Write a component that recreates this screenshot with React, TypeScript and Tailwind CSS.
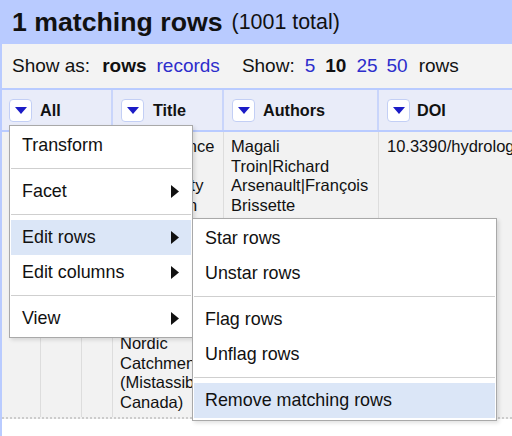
import React from 'react';

const titleLines = [
  'Performance',
  'and',
  'Uncertainty',
  'Evaluation',
  'of Snow',
  'Models on',
  'Snowmelt',
  'Flow',
  'Simulations',
  'over a',
  'Nordic',
  'Catchment',
  '(Mistassibi,',
  'Canada)',
];

const authorLines = ['Magali', 'Troin|Richard', 'Arsenault|François', 'Brissette'];

function DropButton() {
  return (
    <span className="flex h-[23px] w-[23px] shrink-0 items-center justify-center rounded-[4px] border border-[#c3cff5] bg-white">
      <svg width="12" height="7" viewBox="0 0 12 7">
        <polygon points="0,0 12,0 6,7" fill="#1c1cc6" />
      </svg>
    </span>
  );
}

function Arrow() {
  return (
    <svg width="8" height="13" viewBox="0 0 8 13">
      <polygon points="0,0 8,6.5 0,13" fill="#111" />
    </svg>
  );
}

function MenuItem({ label, arrow, active }: { label: string; arrow?: boolean; active?: boolean }) {
  return (
    <div
      className={`flex h-[35px] items-center justify-between pl-[11px] pr-[12px] text-[17.9px] text-[#111] ${
        active ? 'bg-[#dbe6f7]' : ''
      }`}
    >
      <span>{label}</span>
      {arrow && <Arrow />}
    </div>
  );
}

function Sep() {
  return <div className="my-[5px] h-px bg-[#cfcfcf]" />;
}

export default function App() {
  return (
    <div className="relative h-[436px] w-[512px] overflow-hidden border-l-2 border-[#b9cbff] bg-white font-['Liberation_Sans',Arial,sans-serif] text-[#111]">
      {/* summary bar */}
      <div className="flex h-[44px] items-center gap-[9px] bg-[#b9cbff] pl-[10px]">
        <span className="text-[26.7px] font-bold">1 matching rows</span>
        <span className="text-[21.4px]">(1001 total)</span>
      </div>

      {/* view controls */}
      <div className="flex h-[46px] items-center border-b-2 border-[#b9cbff] bg-[#f3f3f3] pl-[10px] text-[19px]">
        <span>Show as:</span>
        <span className="ml-[12px] font-bold">rows</span>
        <span className="ml-[10px] text-[#2d2dcc]">records</span>
        <span className="ml-[22px]">Show:</span>
        <span className="ml-[10px] text-[#2d2dcc]">5</span>
        <span className="ml-[10px] font-bold">10</span>
        <span className="ml-[10px] text-[#2d2dcc]">25</span>
        <span className="ml-[9px] text-[#2d2dcc]">50</span>
        <span className="ml-[11px]">rows</span>
      </div>

      {/* column headers */}
      <div className="flex h-[42px] border-b-2 border-[#b9cbff] bg-[#e9ecf9] text-[16.2px] font-bold">
        <div className="flex w-[111px] shrink-0 items-center gap-[8px] border-r-2 border-[#c9d5fb] pl-[7px]">
          <DropButton />
          <span>All</span>
        </div>
        <div className="flex w-[111px] shrink-0 items-center gap-[9px] border-r-2 border-[#c9d5fb] pl-[8px]">
          <DropButton />
          <span>Title</span>
        </div>
        <div className="flex w-[155px] shrink-0 items-center gap-[8px] border-r-2 border-[#c9d5fb] pl-[8px]">
          <DropButton />
          <span>Authors</span>
        </div>
        <div className="flex min-w-0 flex-1 items-center gap-[7px] pl-[8px]">
          <DropButton />
          <span>DOI</span>
        </div>
      </div>

      {/* data row */}
      <div className="flex h-[287px] border-b-2 border-dotted border-[#cccccc] bg-[#f2f2f2] text-[16.5px] leading-[19.7px]">
        <div className="w-[39px] shrink-0 border-r border-[#dddddd]" />
        <div className="w-[41px] shrink-0 border-r border-[#dddddd]" />
        <div className="w-[31px] shrink-0 border-r border-[#dddddd]" />
        <div className="w-[111px] shrink-0 overflow-hidden border-r border-[#dddddd] pl-[7px] pt-[5px]">
          {titleLines.map((l) => (
            <div key={l} className="whitespace-nowrap">
              {l}
            </div>
          ))}
        </div>
        <div className="w-[155px] shrink-0 border-r border-[#dddddd] pl-[7px] pt-[5px]">
          {authorLines.map((l) => (
            <div key={l} className="whitespace-nowrap">
              {l}
            </div>
          ))}
        </div>
        <div className="min-w-0 flex-1 overflow-hidden whitespace-nowrap pl-[8px] pt-[5px]">10.3390/hydrology2040289</div>
      </div>

      {/* column menu */}
      <div className="absolute left-[7px] top-[125px] w-[184px] border border-[#a9a9a9] bg-white px-px pb-px pt-[2px] shadow-[2px_2px_4px_rgba(0,0,0,0.12)]">
        <MenuItem label="Transform" />
        <Sep />
        <MenuItem label="Facet" arrow />
        <Sep />
        <MenuItem label="Edit rows" arrow active />
        <MenuItem label="Edit columns" arrow />
        <Sep />
        <MenuItem label="View" arrow />
      </div>

      {/* edit rows submenu */}
      <div className="absolute left-[190px] top-[218px] w-[305px] border border-[#a9a9a9] bg-white px-px py-[2px] shadow-[2px_2px_4px_rgba(0,0,0,0.12)]">
        <MenuItem label="Star rows" />
        <MenuItem label="Unstar rows" />
        <Sep />
        <MenuItem label="Flag rows" />
        <MenuItem label="Unflag rows" />
        <Sep />
        <MenuItem label="Remove matching rows" active />
      </div>
    </div>
  );
}
